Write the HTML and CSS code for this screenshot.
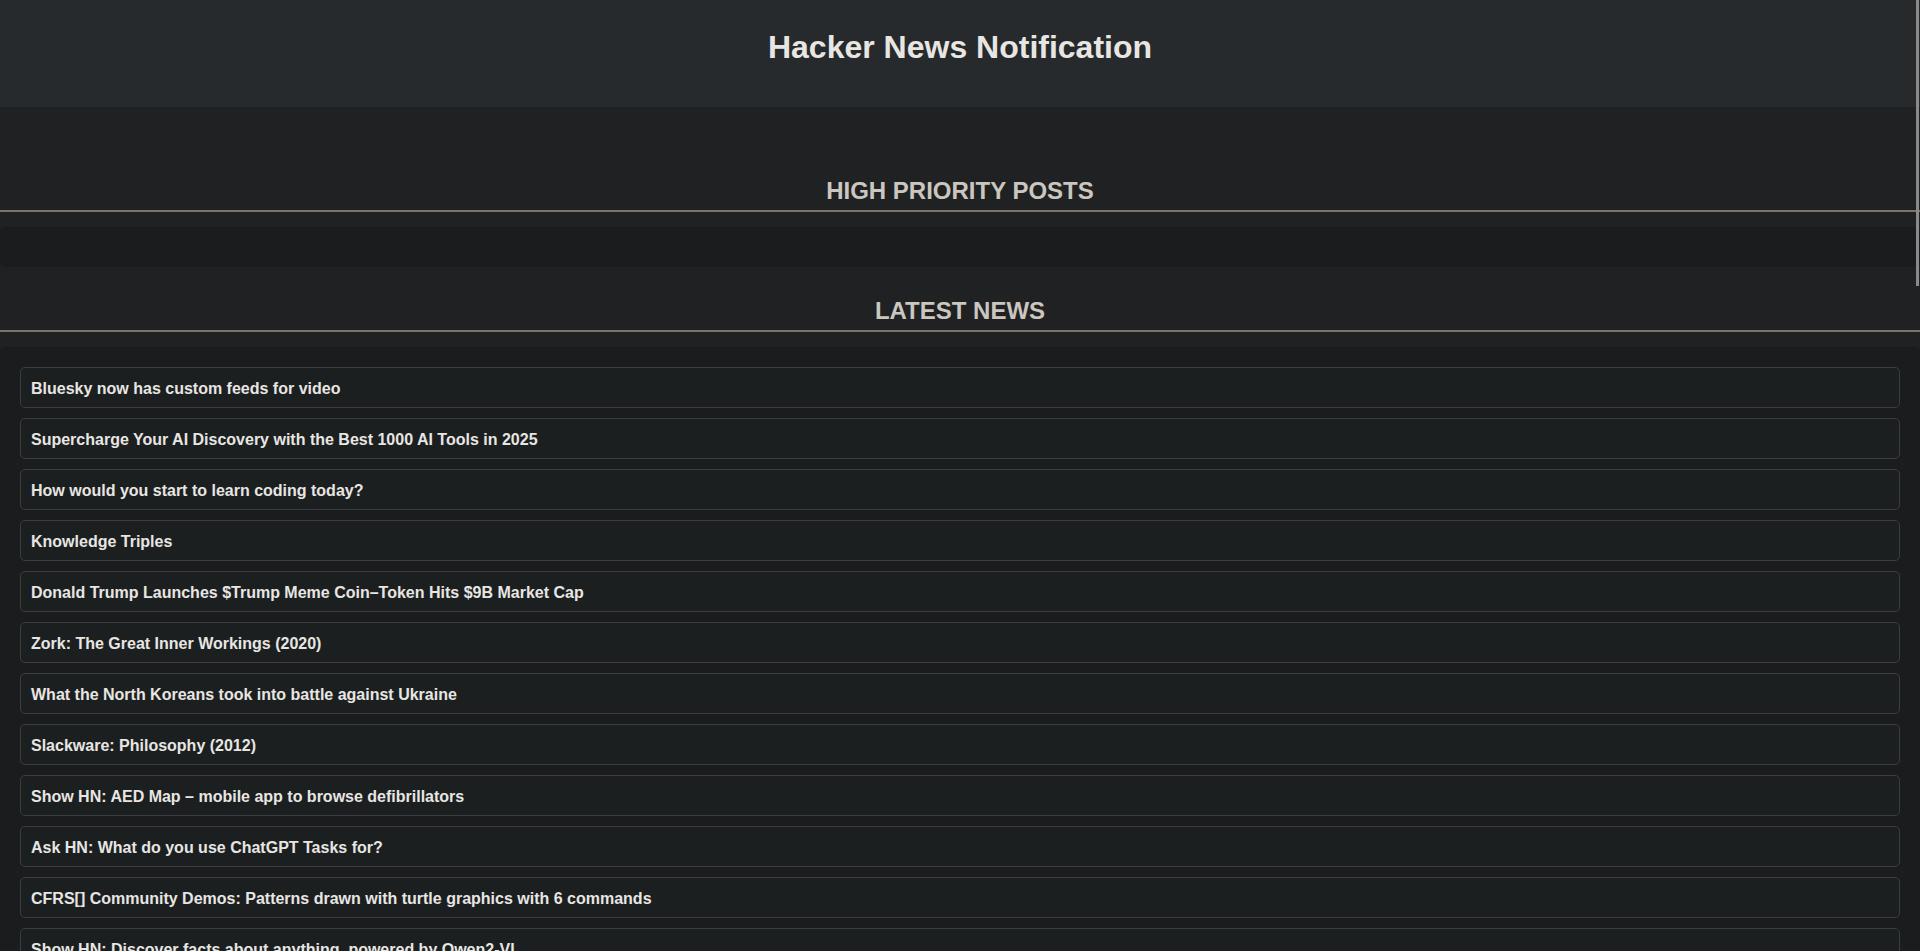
FILE: index.html
```html
<!DOCTYPE html>
<html lang="en">
<head>
<meta charset="utf-8">
<title>Hacker News Notification</title>
<link rel="stylesheet" href="styles.css">
</head>
<body>
<header class="top">
  <h1 class="top-title">Hacker News Notification</h1>
</header>
<main class="main">
  <section class="section">
    <h2 class="section-title">HIGH PRIORITY POSTS</h2>
    <div class="panel"></div>
  </section>
  <section class="section">
    <h2 class="section-title">LATEST NEWS</h2>
    <div class="panel">
      <ul class="news">
        <li class="news-item">Bluesky now has custom feeds for video</li>
        <li class="news-item">Supercharge Your AI Discovery with the Best 1000 AI Tools in 2025</li>
        <li class="news-item">How would you start to learn coding today?</li>
        <li class="news-item">Knowledge Triples</li>
        <li class="news-item">Donald Trump Launches $Trump Meme Coin–Token Hits $9B Market Cap</li>
        <li class="news-item">Zork: The Great Inner Workings (2020)</li>
        <li class="news-item">What the North Koreans took into battle against Ukraine</li>
        <li class="news-item">Slackware: Philosophy (2012)</li>
        <li class="news-item">Show HN: AED Map – mobile app to browse defibrillators</li>
        <li class="news-item">Ask HN: What do you use ChatGPT Tasks for?</li>
        <li class="news-item">CFRS[] Community Demos: Patterns drawn with turtle graphics with 6 commands</li>
        <li class="news-item">Show HN: Discover facts about anything, powered by Qwen2-VL</li>
      </ul>
    </div>
  </section>
</main>
<div class="scroll-thumb" aria-hidden="true"></div>
</body>
</html>
```

FILE: styles.css
```css
html {
  background: #202123;
}

body {
  margin: 0;
  background: #202123;
  color: #e8e6e3;
  font-family: "Liberation Sans", Arial, sans-serif;
}

.top {
  height: 107px;
  box-sizing: border-box;
  padding-top: 29px;
  background: #272a2c;
  text-align: center;
}

.top-title {
  margin: 0;
  font-size: 32px;
  line-height: 37px;
  font-weight: 700;
  color: #e8e6e3;
}

.main {
  padding-top: 40px;
}

.section-title {
  margin: 30px 0 15px;
  padding-bottom: 5px;
  border-bottom: 2px solid #7b7468;
  font-size: 24px;
  line-height: 28px;
  font-weight: 700;
  text-align: center;
  color: #cbc6bf;
}

.panel {
  padding: 20px;
  border-radius: 5px;
  background: #1b1c1e;
}

.news {
  list-style: none;
  margin: 0;
  padding: 0;
  display: flex;
  flex-direction: column;
  gap: 10px;
}

.news-item {
  padding: 11px 10px 9px;
  border: 1px solid #3a3e40;
  border-radius: 5px;
  background: #1c1f20;
  font-size: 16px;
  line-height: 19px;
  font-weight: 700;
  color: #e8e6e3;
}

.scroll-thumb {
  position: fixed;
  top: 0;
  right: 1px;
  width: 3px;
  height: 286px;
  background: #8a8a8a;
}
```
